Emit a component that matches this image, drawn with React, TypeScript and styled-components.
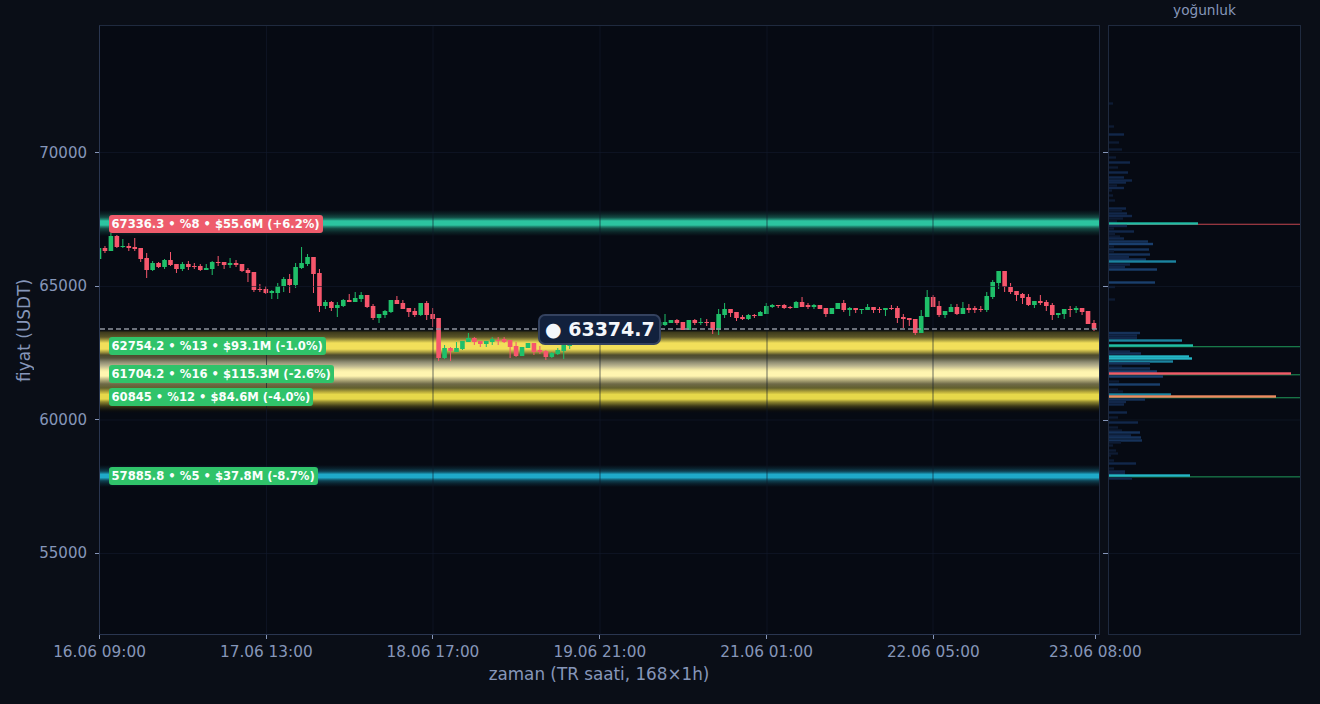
import styled, { createGlobalStyle } from 'styled-components'

const GlobalStyle = createGlobalStyle`
    html, body {
        margin: 0;
        padding: 0;
        background: #0a0e17;
    }
`

const PLOT_W = 999
const PLOT_H = 608
const PLOT_TOP = 25
const PLOT_LEFT = 99
const STEP = 5.958
const PRICE_PX = 0.02673

// pixel y in page coordinates
const priceY = (price: number) => 419.35 - (price - 60000) * PRICE_PX

// [up, bodyTop, bodyBottom, wickTop, wickBottom] in page y
const CANDLES: number[][] = [
    [1, 248, 259, 246, 259], [0, 248, 251, 246, 253], [1, 236, 251, 233, 251], [0, 236, 247, 235, 248],
    [1, 246, 247, 239, 248], [0, 246, 248, 243, 251], [0, 247, 249, 238, 251], [0, 248, 259, 248, 262],
    [0, 258, 270, 253, 278], [1, 263, 270, 261, 271], [0, 263, 267, 262, 268], [1, 260, 267, 259, 269],
    [0, 260, 265, 252, 266], [0, 264, 269, 264, 273], [1, 264, 269, 262, 271], [0, 264, 267, 261, 270],
    [0, 266, 267, 263, 269], [0, 266, 270, 264, 271], [1, 268, 270, 264, 270], [1, 262, 269, 261, 275],
    [0, 262, 263, 256, 266], [0, 262, 265, 262, 269], [1, 263, 265, 258, 268], [0, 263, 265, 260, 267],
    [0, 264, 271, 264, 272], [0, 270, 273, 268, 282], [0, 272, 290, 272, 292], [0, 289, 290, 284, 292],
    [0, 289, 293, 286, 294], [1, 291, 293, 290, 299], [1, 286, 293, 283, 299], [1, 279, 286, 277, 292],
    [0, 279, 285, 274, 293], [1, 267, 285, 263, 288], [1, 263, 268, 247, 269], [1, 257, 264, 254, 266],
    [0, 257, 274, 257, 293], [0, 273, 306, 269, 312], [1, 302, 306, 300, 309], [0, 302, 308, 301, 311],
    [1, 305, 308, 302, 317], [1, 300, 306, 299, 307], [0, 300, 302, 294, 302], [1, 298, 302, 292, 302],
    [1, 295, 299, 292, 302], [0, 295, 307, 295, 308], [0, 306, 318, 304, 320], [1, 314, 318, 314, 323],
    [1, 311, 315, 310, 318], [1, 300, 312, 300, 313], [0, 300, 304, 296, 304], [0, 303, 309, 300, 309],
    [0, 308, 312, 308, 317], [0, 311, 315, 308, 317], [1, 303, 315, 303, 316], [0, 303, 315, 301, 320],
    [0, 314, 319, 308, 327], [0, 318, 358, 318, 361], [1, 348, 358, 345, 359], [0, 348, 351, 347, 361],
    [1, 348, 352, 342, 352], [1, 341, 349, 341, 350], [1, 338, 342, 333, 342], [0, 338, 342, 337, 345],
    [0, 341, 344, 341, 347], [1, 341, 344, 341, 347], [1, 339, 342, 337, 345], [0, 340, 341, 337, 345],
    [0, 339, 342, 337, 343], [0, 340, 347, 340, 358], [0, 346, 356, 342, 357], [1, 347, 356, 347, 356],
    [1, 343, 348, 343, 348], [0, 343, 352, 343, 355], [0, 350, 352, 346, 354], [0, 351, 357, 350, 360],
    [1, 353, 357, 352, 358], [1, 350, 354, 348, 355], [1, 345, 351, 345, 359], [1, 340, 346, 338, 349],
    [1, 335, 340, 333, 342], [0, 335, 339, 332, 341], [1, 330, 336, 328, 338], [1, 327, 331, 325, 333],
    [0, 327, 332, 325, 334], [1, 326, 330, 323, 332], [0, 326, 331, 324, 333], [1, 324, 328, 322, 330],
    [0, 324, 329, 322, 331], [1, 323, 327, 321, 329], [0, 323, 328, 320, 330], [1, 322, 326, 320, 328],
    [0, 322, 327, 320, 329], [1, 322, 325, 320, 327], [1, 322, 326, 318, 328], [1, 322, 325, 314, 326],
    [1, 320, 323, 320, 323], [0, 320, 323, 319, 325], [0, 322, 330, 322, 330], [1, 320, 330, 320, 330],
    [0, 320, 323, 319, 325], [1, 322, 323, 318, 325], [0, 322, 323, 319, 326], [0, 322, 330, 322, 334],
    [1, 314, 330, 309, 335], [1, 309, 315, 303, 318], [0, 309, 313, 309, 317], [0, 312, 318, 312, 321],
    [0, 317, 319, 315, 320], [1, 315, 319, 314, 320], [0, 315, 316, 314, 318], [1, 312, 316, 311, 316],
    [1, 306, 314, 303, 314], [1, 305, 307, 304, 308], [0, 305, 306, 305, 308], [0, 305, 308, 304, 309],
    [0, 307, 308, 306, 309], [1, 302, 308, 301, 308], [0, 302, 307, 297, 307], [0, 305, 307, 303, 309],
    [1, 305, 307, 304, 309], [0, 305, 309, 305, 309], [0, 308, 314, 308, 317], [1, 308, 314, 308, 314],
    [1, 303, 309, 303, 309], [0, 303, 310, 300, 312], [1, 308, 310, 307, 316], [0, 308, 310, 308, 313],
    [1, 309, 310, 309, 314], [1, 307, 310, 304, 310], [0, 307, 310, 307, 313], [0, 309, 310, 307, 313],
    [1, 308, 310, 308, 316], [0, 308, 309, 305, 310], [0, 308, 318, 306, 323], [0, 317, 319, 314, 328],
    [0, 318, 320, 318, 326], [0, 319, 333, 319, 335], [1, 316, 333, 310, 333], [1, 297, 317, 290, 317],
    [0, 297, 307, 295, 307], [0, 306, 315, 301, 317], [1, 311, 315, 311, 318], [1, 307, 312, 304, 312],
    [0, 307, 314, 304, 315], [1, 308, 314, 302, 314], [0, 308, 310, 304, 313], [0, 308, 310, 306, 313],
    [0, 309, 310, 306, 312], [1, 296, 310, 292, 312], [1, 282, 297, 280, 299], [1, 271, 283, 271, 289],
    [0, 271, 287, 271, 292], [0, 287, 292, 283, 294], [0, 291, 295, 291, 301], [0, 294, 298, 293, 304],
    [0, 297, 305, 294, 306], [1, 301, 305, 301, 308], [0, 301, 303, 295, 305], [0, 302, 306, 300, 311],
    [0, 305, 315, 303, 320], [1, 313, 315, 313, 318], [1, 309, 314, 309, 319], [0, 309, 310, 306, 317],
    [1, 308, 310, 306, 313], [0, 308, 312, 308, 315], [0, 311, 324, 311, 324], [0, 323, 329, 320, 331],
]

// [page y, width]
const DENSITY: number[][] = [
    [103, 4], [126, 5], [134, 15], [142, 10], [149, 13], [157, 7], [162, 21], [167, 9], [172, 19],
    [177, 15], [180, 23], [182, 17], [185, 8], [187.5, 15], [190, 3], [195, 4], [200, 6], [208, 17],
    [210, 13], [213, 18], [215.5, 23], [218, 14], [221, 8], [223, 89], [225.5, 18], [228, 5], [231, 25],
    [233.5, 6], [236, 11], [238, 15], [241, 39], [243.5, 44], [246, 5], [249, 40], [251, 5], [254, 41],
    [256.5, 20], [259, 37], [261, 67], [264, 21], [266.5, 16], [269, 48], [282, 46], [286.5, 6], [299, 6],
    [332.5, 31], [335, 28], [337.5, 28], [340, 73], [345, 84], [351, 21], [353, 32], [356, 80], [358, 83],
    [361, 64], [363, 41], [366, 13], [368, 41], [371, 48], [373, 182], [376, 54], [381, 10], [384, 51],
    [389, 9], [391, 14], [394, 62], [396, 167], [399, 36], [401.5, 17], [404, 15], [412, 18], [417, 9],
    [422, 29], [427, 9], [430, 13], [432, 31], [435, 22], [437, 32], [440, 33], [442, 12], [445, 4],
    [450, 7], [453, 9], [455, 2], [460, 5], [463, 27], [468, 5], [471, 16], [473, 16], [475, 81], [478, 23],
]

const barColor = (w: number) => {
    if (w > 175) return '#f25a68'
    if (w > 150) return '#ee8a60'
    if (w > 83.5) return '#20bda6'
    if (w > 78) return '#24b6c6'
    if (w > 60) return '#1c84a0'
    if (w > 42) return '#1a3f6d'
    if (w > 30) return '#16325a'
    if (w > 14) return '#12274a'
    return '#0e1b33'
}

const LEVELS = [
    { price: 67336.3, text: '67336.3 • %8 • $55.6M (+6.2%)', bg: '#ee5c6c', line: '#c3454f' },
    { price: 62754.2, text: '62754.2 • %13 • $93.1M (-1.0%)', bg: '#30c36a', line: '#1f9a5a' },
    { price: 61704.2, text: '61704.2 • %16 • $115.3M (-2.6%)', bg: '#30c36a', line: '#1f9a5a' },
    { price: 60845, text: '60845 • %12 • $84.6M (-4.0%)', bg: '#30c36a', line: '#1f9a5a' },
    { price: 57885.8, text: '57885.8 • %5 • $37.8M (-8.7%)', bg: '#30c36a', line: '#1f9a5a' },
]

const Y_TICKS = ['70000', '65000', '60000', '55000']
const X_TICKS = [
    { label: '16.06 09:00', gap: 166.8 },
    { label: '17.06 13:00', gap: 166.7 },
    { label: '18.06 17:00', gap: 166.8 },
    { label: '19.06 21:00', gap: 166.8 },
    { label: '21.06 01:00', gap: 166.7 },
    { label: '22.06 05:00', gap: 162.2 },
    { label: '23.06 08:00', gap: 0 },
]
const GRID_X = [266, 432.5, 599.5, 766.5, 932.5]
const GRID_Y = [152, 286, 419.5, 553]

const Page = styled.div`
    width: 1320px;
    height: 704px;
    overflow: hidden;
    background: #0a0e17;
    display: grid;
    grid-template-columns: 99px 1001px 8px 193px 19px;
    grid-template-rows: 25px 610px 69px;
    font-family: 'DejaVu Sans', sans-serif;
    color: #8696b9;
`

const DensityTitle = styled.div`
    grid-column: 4;
    grid-row: 1;
    font-size: 13.7px;
    text-align: center;
    line-height: 21px;
`

const YAxis = styled.div`
    grid-column: 1;
    grid-row: 2;
    display: flex;
`

const YTitle = styled.div`
    flex: 0 0 28px;
    margin-left: 10px;
    display: flex;
    align-items: center;
    justify-content: center;
    writing-mode: vertical-rl;
    transform: rotate(180deg);
    font-size: 17px;
    white-space: nowrap;
`

const YTicks = styled.div`
    flex: 1;
    min-width: 0;
    display: flex;
    flex-direction: column;
    padding-top: 127px;
`

const YTick = styled.div`
    flex: 0 0 133.67px;
    height: 133.67px;
`

const YTickInner = styled.div`
    height: 1px;
    display: flex;
    align-items: center;
    justify-content: flex-end;
    gap: 8px;
    font-size: 15px;
    line-height: 16px;
`

const TickMark = styled.span`
    flex: none;
    width: 4px;
    height: 1px;
    background: #8696b9;
`

const PlotFrame = styled.div`
    grid-column: 2;
    grid-row: 2;
    position: relative;
    background: #060a13;
    border: 1px solid #1f2a3f;
    border-left-color: #2a3650;
    border-bottom-color: #2a3650;
    box-sizing: border-box;
`

const ChartSvg = styled.svg`
    display: block;
    width: ${PLOT_W}px;
    height: ${PLOT_H}px;
`

const LevelBadge = styled.div<{ $bg: string }>`
    position: absolute;
    left: 8.5px;
    transform: translateY(-50%);
    height: 18px;
    padding: 0 3px;
    border-radius: 3px;
    background: ${({ $bg }) => $bg};
    color: #fbfffd;
    font-size: 11.6px;
    font-weight: 700;
    line-height: 18px;
    white-space: nowrap;
`

const PriceTip = styled.div`
    position: absolute;
    left: 438px;
    top: 287.5px;
    box-sizing: border-box;
    width: 122.5px;
    height: 31.5px;
    padding-left: 5px;
    display: flex;
    align-items: center;
    background: #12213d;
    border: 2px solid #34425f;
    border-radius: 7px;
    color: #f4f7fb;
    font-size: 19px;
    font-weight: 700;
    white-space: nowrap;
`

const DensityFrame = styled.div`
    grid-column: 4;
    grid-row: 2;
    position: relative;
    background: #060a13;
    border: 1px solid #1f2a3f;
    box-sizing: border-box;
`

const DensityTick = styled.span`
    position: absolute;
    left: -6px;
    width: 5px;
    height: 1px;
    background: #8696b9;
`

const DensitySvg = styled.svg`
    display: block;
    width: 191px;
    height: 608px;
`

const XAxis = styled.div`
    grid-column: 2 / 5;
    grid-row: 3;
    display: flex;
    flex-direction: column;
`

const XTicks = styled.div`
    display: flex;
    height: 25px;
`

const XTick = styled.div<{ $gap: number }>`
    flex: 0 0 ${({ $gap }) => $gap}px;
    width: ${({ $gap }) => $gap}px;
`

const XTickInner = styled.div`
    width: 1px;
    display: flex;
    flex-direction: column;
    align-items: center;
    font-size: 15.3px;
    line-height: 18px;
    white-space: nowrap;
`

const XTickMark = styled.span`
    width: 1px;
    height: 4px;
    flex: none;
    background: #8696b9;
    margin-bottom: 4px;
`

const XTitle = styled.div`
    width: 1000px;
    text-align: center;
    font-size: 16.8px;
    line-height: 20px;
    margin-top: 4px;
`

const YELLOW_STOPS: [number, string, number][] = [
    [330, '#3a3716', 0],
    [332.5, '#3f3c1c', 1],
    [337, '#5c5628', 1],
    [340, '#a89c40', 1],
    [343, '#f2df5a', 1],
    [349, '#f2df5a', 1],
    [352, '#a89c40', 1],
    [355, '#4e4b2c', 1],
    [358, '#55543c', 1],
    [362, '#8d8b72', 1],
    [366, '#bcb690', 1],
    [370, '#f4eaa6', 1],
    [372, '#fff5b0', 1],
    [376, '#fff5b0', 1],
    [379, '#c4bc88', 1],
    [384, '#6e6a48', 1],
    [388, '#62602e', 1],
    [392, '#b8aa3c', 1],
    [394.5, '#e6d84a', 1],
    [399, '#e6d84a', 1],
    [402, '#8c842e', 1],
    [406, '#3e3b18', 1],
    [411, '#0f0f0c', 0.6],
    [414, '#060a13', 0],
]

const toPlotY = (y: number) => y - PLOT_TOP - 1
const toPlotX = (x: number) => x - PLOT_LEFT - 1

const glowStops = (color: string) => (
    <>
        <stop offset="0" stopColor={color} stopOpacity={0} />
        <stop offset="0.15" stopColor={color} stopOpacity={0.14} />
        <stop offset="0.28" stopColor={color} stopOpacity={0.34} />
        <stop offset="0.36" stopColor={color} stopOpacity={0.66} />
        <stop offset="0.42" stopColor={color} stopOpacity={1} />
        <stop offset="0.58" stopColor={color} stopOpacity={1} />
        <stop offset="0.64" stopColor={color} stopOpacity={0.66} />
        <stop offset="0.72" stopColor={color} stopOpacity={0.34} />
        <stop offset="0.85" stopColor={color} stopOpacity={0.14} />
        <stop offset="1" stopColor={color} stopOpacity={0} />
    </>
)

const Candles = () => (
    <g>
        {CANDLES.map(([up, top, bottom, high, low], i) => {
            const x = toPlotX(PLOT_LEFT) + i * STEP
            const fill = up ? '#1fbf69' : '#f6566c'
            return (
                <g key={i} fill={fill}>
                    <rect x={x - 0.5} y={toPlotY(high)} width={1} height={low - high} />
                    <rect x={x - 2.3} y={toPlotY(top)} width={4.6} height={Math.max(bottom - top, 1)} />
                </g>
            )
        })}
    </g>
)

export default function App() {
    return (
        <Page>
            <GlobalStyle />
            <DensityTitle>yoğunluk</DensityTitle>
            <YAxis>
                <YTitle>fiyat (USDT)</YTitle>
                <YTicks>
                    {Y_TICKS.map((t) => (
                        <YTick key={t}>
                            <YTickInner>
                                {t}
                                <TickMark />
                            </YTickInner>
                        </YTick>
                    ))}
                </YTicks>
            </YAxis>
            <PlotFrame>
                <ChartSvg viewBox={`0 0 ${PLOT_W} ${PLOT_H}`}>
                    <defs>
                        <linearGradient id="tealBand" x1="0" y1="0" x2="0" y2="1">
                            {glowStops('#2cc4a0')}
                        </linearGradient>
                        <linearGradient id="cyanBand" x1="0" y1="0" x2="0" y2="1">
                            {glowStops('#1fa9c9')}
                        </linearGradient>
                        <linearGradient
                            id="yellowBand"
                            gradientUnits="userSpaceOnUse"
                            x1="0"
                            x2="0"
                            y1={toPlotY(330)}
                            y2={toPlotY(414)}
                        >
                            {YELLOW_STOPS.map(([y, c, o]) => (
                                <stop key={y} offset={(y - 330) / 84} stopColor={c} stopOpacity={o} />
                            ))}
                        </linearGradient>
                    </defs>
                    <rect x={0} y={toPlotY(210)} width={PLOT_W} height={26} fill="url(#tealBand)" />
                    <rect x={0} y={toPlotY(330)} width={PLOT_W} height={84} fill="url(#yellowBand)" />
                    <rect x={0} y={toPlotY(465)} width={PLOT_W} height={22} fill="url(#cyanBand)" />
                    <Candles />
                    {GRID_X.map((x) => (
                        <rect
                            key={x}
                            x={toPlotX(x)}
                            y={0}
                            width={1}
                            height={PLOT_H}
                            fill="#111a2b"
                            opacity={0.62}
                        />
                    ))}
                    {GRID_Y.map((y) => (
                        <rect
                            key={y}
                            x={0}
                            y={toPlotY(y)}
                            width={PLOT_W}
                            height={1}
                            fill="#111a2b"
                            opacity={0.62}
                        />
                    ))}
                    <line
                        x1={0}
                        x2={PLOT_W}
                        y1={toPlotY(329)}
                        y2={toPlotY(329)}
                        stroke="#8f949e"
                        strokeWidth={1.5}
                        strokeDasharray="5 3"
                    />
                </ChartSvg>
                {LEVELS.map((l) => (
                    <LevelBadge key={l.price} $bg={l.bg} style={{ top: priceY(l.price) - PLOT_TOP - 0.5 }}>
                        {l.text}
                    </LevelBadge>
                ))}
                <PriceTip>● 63374.7</PriceTip>
            </PlotFrame>
            <DensityFrame>
                {GRID_Y.map((y) => (
                    <DensityTick key={y} style={{ top: y - PLOT_TOP - 1 }} />
                ))}
                <DensitySvg viewBox="0 0 191 608">
                    {GRID_Y.map((y) => (
                        <rect key={y} x={0} y={toPlotY(y)} width={191} height={1} fill="#0d1422" />
                    ))}
                    {LEVELS.map((l) => (
                        <rect
                            key={l.price}
                            x={0}
                            y={toPlotY(priceY(l.price)) + 0.5}
                            width={191}
                            height={1}
                            fill={l.line}
                        />
                    ))}
                    {DENSITY.map(([y, w]) => (
                        <rect
                            key={y}
                            x={0}
                            y={toPlotY(y) - 0.7}
                            width={w}
                            height={2.4}
                            fill={barColor(w)}
                        />
                    ))}
                </DensitySvg>
            </DensityFrame>
            <XAxis>
                <XTicks>
                    {X_TICKS.map((t) => (
                        <XTick key={t.label} $gap={t.gap}>
                            <XTickInner>
                                <XTickMark />
                                {t.label}
                            </XTickInner>
                        </XTick>
                    ))}
                </XTicks>
                <XTitle>zaman (TR saati, 168×1h)</XTitle>
            </XAxis>
        </Page>
    )
}
